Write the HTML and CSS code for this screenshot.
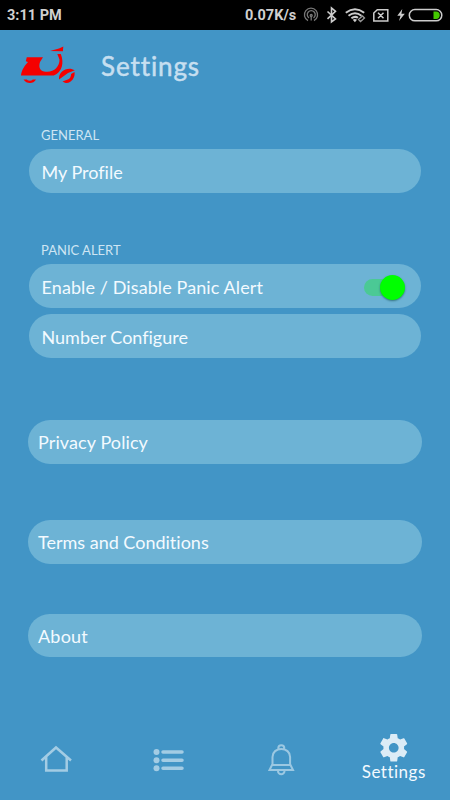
FILE: index.html
```html
<!DOCTYPE html>
<html lang="en">
<head>
<meta charset="utf-8">
<title>Settings</title>
<link rel="stylesheet" href="styles.css">
</head>
<body>
<div class="screen">
  <div class="status">
    <span class="time">3:11 PM</span>
    <span class="speed">0.07K/s</span>
    <svg class="status-icons" width="148" height="30" viewBox="302 0 148 30" fill="none" stroke="#ccc" stroke-width="1.3">
      <g stroke="#777"><path d="M308 20.600a6.600 6.600 0 1 1 6 0M309 18a4 4 0 1 1 4.500 0"/><circle cx="311.200" cy="15.500" r="1"/><path d="M311.200 16v4.500"/></g>
      <path stroke-width="1.600" d="M327.500 11.500l8 7.500-4 3V8l4 3.300-8 7.500"/>
      <g stroke-width="2"><path d="M345.800 12.700q9.200-6.800 18.400 0M348.500 15.700q6.500-4.700 13 0M351.400 18.300q3.600-2.600 6.600-.5"/></g>
      <path fill="#ccc" stroke="none" d="M352.700 19.700q2.200-1.500 4.300 0l-2.100 2.500z"/>
      <path stroke="#999" d="M358.500 19.500l4-3.500 2 2-4 3.500z"/>
      <path stroke-width="1.500" d="M377.300 9.700h10.500V21h-14v-8z M378 12.800l5.500 5.400m0-5.400l-5.500 5.400"/>
      <path fill="#ccc" stroke="none" d="M402.300 9l-5 6.800h3.200l-1.500 5.200 5.800-7.300h-3.400z"/>
      <rect x="409.300" y="9.600" width="32.500" height="11.200" rx="5.600" stroke-width="1.500"/>
      <path fill="#45c800" stroke="none" d="M433.500 11.500h2.500a3.700 3.700 0 0 1 0 7.400h-2.500z"/>
    </svg>
  </div>
  <header class="header">
    <svg class="logo" width="56" height="40" viewBox="20 44 56 40" fill="#f50000">
      <path d="M50 51l9-2.500 4.300-2-.4 4.800z"/>
      <path d="M57.300 54h3.500c3.500 9 1.400 18-7 21.500H21c.4-4 2-8 7-13.500l-2.200-.8 1-4H43L40 62c-1.500 4.500-.5 8.500 4 9.500 9 2 15.600-4.500 15.500-12z"/>
      <path d="M59 79.500c-.4-7 5.500-11.500 12.500-10.500l3.300 1.200L68 73z"/>
      <path d="M74.500 72c1 6-3.800 12-9.500 10.700l-2.500-1.300 4.600-1.700c3-.7 3.800-3 4-5.800z"/>
      <path d="M23.500 79.500h3.300c1.500 1.600 4.400 1.600 6 0h3.200c-2.500 4.700-9.500 4.700-12.500 0z"/>
    </svg>
    <h1 class="title">Settings</h1>
  </header>
  <main class="content">
    <section class="group">
      <h2 class="label general">GENERAL</h2>
      <div class="row"><span class="t-profile">My Profile</span></div>
    </section>
    <section class="group">
      <h2 class="label panic">PANIC ALERT</h2>
      <div class="row"><span class="t-enable">Enable / Disable Panic Alert</span><span class="switch"><span class="knob"></span></span></div>
      <div class="row second"><span class="t-number">Number Configure</span></div>
    </section>
    <div class="row link privacy"><span class="t-privacy">Privacy Policy</span></div>
    <div class="row link terms"><span class="t-terms">Terms and Conditions</span></div>
    <div class="row link about"><span class="t-about">About</span></div>
  </main>
  <nav class="nav">
    <div class="tab"><svg width="34" height="34" viewBox="39 743 34 34" fill="none" stroke="#a3cce4" stroke-width="2.500"><path d="M41.500 760.500L56 747.500l15 13M46.200 757v13.500h20.500V757"/></svg></div>
    <div class="tab"><svg width="34" height="34" viewBox="152 743 34 34" fill="#a3cce4" stroke="#a3cce4"><g stroke="none"><circle cx="156.500" cy="752" r="3"/><circle cx="156.500" cy="760.300" r="3"/><circle cx="156.500" cy="768.300" r="3"/></g><path stroke-width="3.500" stroke-linecap="round" d="M163 752h19M163 760.300h19M163 768.300h19"/></svg></div>
    <div class="tab"><svg width="34" height="34" viewBox="264 743 34 34" fill="none" stroke="#9bc8e2" stroke-width="2"><path d="M272.500 764.500V757c0-5 4-8 8.800-8s8.800 3 8.800 8v7.500M278.300 749v-.7a3 3 0 0 1 6 0v.7M272 765h18.500l2.500 5h-23.500zM278 771a3.200 3.200 0 0 0 6.500 0"/></svg></div>
    <div class="tab active">
      <svg width="34" height="34" viewBox="377 730 34 34"><path transform="translate(377.200 731.200) scale(1.380)" fill="#dcecf6" d="M19.430 12.980c.04-.32.07-.64.070-.980s-.03-.66-.07-.98l2.110-1.650c.19-.15.24-.42.120-.64l-2-3.460c-.12-.22-.39-.3-.61-.22l-2.490 1c-.52-.4-1.080-.73-1.690-.98l-.38-2.650C14.460 2.180 14.250 2 14 2h-4c-.25 0-.46.180-.49.420l-.38 2.650c-.61.250-1.170.590-1.690.980l-2.490-1c-.23-.09-.49 0-.61.220l-2 3.460c-.13.220-.07.490.120.640l2.110 1.650c-.04.320-.07.650-.07.980s.03.660.070.980l-2.110 1.650c-.19.150-.24.420-.12.640l2 3.460c.120.220.390.300.610.220l2.490-1c.520.400 1.080.730 1.690.980l.38 2.650c.03.240.24.420.49.420h4c.25 0 .46-.18.49-.42l.38-2.650c.61-.25 1.170-.59 1.690-.98l2.490 1c.23.090.49 0 .61-.22l2-3.460c.12-.22.070-.49-.12-.64zM12 15.500c-1.930 0-3.500-1.570-3.500-3.500s1.570-3.500 3.500-3.500 3.500 1.570 3.500 3.500-1.570 3.500-3.500 3.500z"/></svg>
      <span class="tab-text">Settings</span>
    </div>
  </nav>
</div>
</body>
</html>
```

FILE: styles.css
```css
* { box-sizing: border-box; }
body { margin: 0; font-family: Lato, sans-serif; font-variant-ligatures: none; }
.screen { width: 450px; height: 800px; background: #4295c6; display: flex; flex-direction: column; color: #f3faff; overflow: hidden; white-space: nowrap; }
.status { height: 30px; background: #000; color: #d0d0d0; display: flex; align-items: center; font: bold 14.500px/32px Roboto, sans-serif; flex: none; }
.time { width: 238px; margin-left: 7px; padding-top: 2px; }
.speed { width: 57px; padding-top: 2px; }
.header { height: 72px; padding-left: 20px; display: flex; align-items: flex-start; }
.logo { margin-top: 14px; }
.title { margin: 20px 0 0 25px; font-size: 26px; line-height: 32px; font-weight: 400; -webkit-text-stroke: .5px #c6dff0; letter-spacing: .9px; color: #c6dff0; }
.content { padding: 26px 29px 0; flex: 1; }
.group { height: 115px; }
.group + .group { height: 164px; }
.label { margin: 0 0 0 12px; height: 21px; font-size: 13px; line-height: 15px; font-weight: 400; color: #cee5f3; }
.row { height: 43.500px; border-radius: 22px; background: #6db3d5; padding: 2px 16px 0 12.500px; display: flex; align-items: center; justify-content: space-between; font-size: 18px; line-height: 24px; }
.t-enable, .t-privacy { letter-spacing: .1px; }
.second { margin-top: 6.500px; }
.link { margin: 0 -1px 56.500px; padding-left: 10px; padding-top: 1px; }
.privacy { margin-top: 13px; }
.terms { margin-bottom: 50px; }
.t-about { letter-spacing: .2px; }
.switch { width: 41px; height: 17px; margin-top: 1px; border-radius: 9px; background: linear-gradient(90deg, #4bc995 75%, transparent 75%); display: flex; align-items: center; justify-content: flex-end; }
.knob { width: 25px; height: 25px; border-radius: 50%; background: #0f0; box-shadow: 0 1px 2px #34747f; }
.nav { height: 74px; display: flex; }
.tab { width: 112.500px; padding-top: 17px; display: flex; flex-direction: column; align-items: center; }
.tab.active { padding-top: 4px; }
.tab-text { font-size: 17px; line-height: 16px; letter-spacing: .5px; }
```
